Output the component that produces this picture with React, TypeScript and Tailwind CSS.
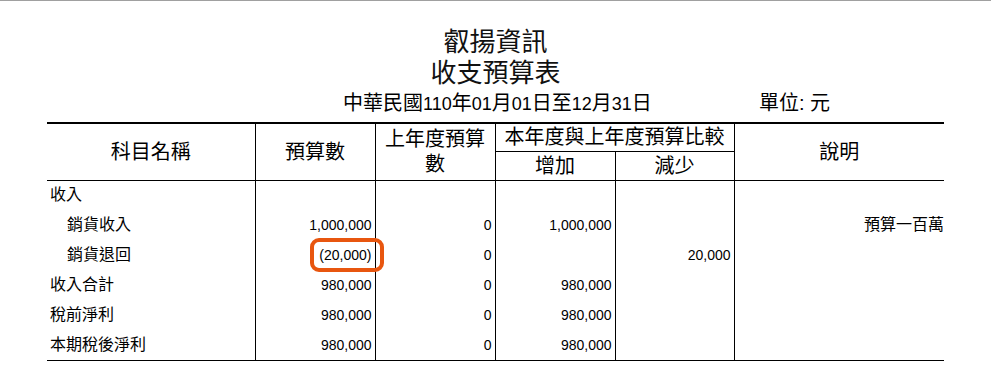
import React from "react";

const cjk = "font-['Liberation_Sans','Noto_Sans_CJK_TC',sans-serif]";

type Row = {
  name: string;
  indent?: boolean;
  budget?: string;
  last?: string;
  inc?: string;
  dec?: string;
  note?: string;
};

const rows: Row[] = [
  { name: "收入" },
  { name: "銷貨收入", indent: true, budget: "1,000,000", last: "0", inc: "1,000,000", note: "預算一百萬" },
  { name: "銷貨退回", indent: true, budget: "(20,000)", last: "0", dec: "20,000" },
  { name: "收入合計", budget: "980,000", last: "0", inc: "980,000" },
  { name: "稅前淨利", budget: "980,000", last: "0", inc: "980,000" },
  { name: "本期稅後淨利", budget: "980,000", last: "0", inc: "980,000" },
];

const Num = ({ v }: { v?: string }) => (
  <span className="text-[14px] font-['Liberation_Sans',sans-serif]">{v}</span>
);

// half-width digits in the date line
const D = ({ children }: { children: React.ReactNode }) => (
  <span className="text-[18px]">{children}</span>
);

export default function App() {
  return (
    <div className={`relative w-[991px] h-[371px] bg-white text-black border-t border-[#a0a0a0] ${cjk}`}>
      <div className="pl-[47px] pt-[26px]">
        <div className="w-[897px] text-center text-[26px] leading-[31px] text-[#111]">
          <div>叡揚資訊</div>
          <div>收支預算表</div>
        </div>
        <div className="flex items-baseline w-[897px] mt-[2px] text-[20px] leading-[24px]">
          <span className="ml-[296px] w-[416px]">
            中華民國<D>110</D>年<D>01</D>月<D>01</D>日至<D>12</D>月<D>31</D>日
          </span>
          <span>單位: 元</span>
        </div>

        <table className="mt-[6px] w-[897px] table-fixed border-collapse">
          <colgroup>
            <col className="w-[208px]" />
            <col className="w-[120px]" />
            <col className="w-[120px]" />
            <col className="w-[120px]" />
            <col className="w-[119px]" />
            <col className="w-[210px]" />
          </colgroup>
          <thead className="text-[20px] font-normal">
            <tr className="h-[28px]">
              <th rowSpan={2} className="border-t-2 border-b border-r border-black font-normal">科目名稱</th>
              <th rowSpan={2} className="border-t-2 border-b border-r border-black font-normal">預算數</th>
              <th rowSpan={2} className="border-t-2 border-b border-r border-black font-normal leading-[25px]">
                上年度預算
                <br />數
              </th>
              <th colSpan={2} className="border-t-2 border-b border-r border-black font-normal leading-[24px]">
                本年度與上年度預算比較
              </th>
              <th rowSpan={2} className="border-t-2 border-b border-black font-normal">說明</th>
            </tr>
            <tr className="h-[29px]">
              <th className="border-b border-r border-black font-normal leading-[24px]">增加</th>
              <th className="border-b border-r border-black font-normal leading-[24px]">減少</th>
            </tr>
          </thead>
          <tbody className="text-[16px]">
            {rows.map((r, i) => (
              <tr key={i} className={`h-[30px] ${i === rows.length - 1 ? "border-b border-black" : ""}`}>
                <td className={`border-r border-black ${r.indent ? "pl-[20px]" : "pl-[3px]"}`}>{r.name}</td>
                <td className="border-r border-black text-right pr-[3px]"><Num v={r.budget} /></td>
                <td className="border-r border-black text-right pr-[3px]"><Num v={r.last} /></td>
                <td className="border-r border-black text-right pr-[3px]"><Num v={r.inc} /></td>
                <td className="border-r border-black text-right pr-[3px]"><Num v={r.dec} /></td>
                <td className="text-right pr-0">{r.note}</td>
              </tr>
            ))}
          </tbody>
        </table>
      </div>

      <div className="absolute left-[310px] top-[237px] w-[74px] h-[34px] border-4 border-[#e8560f] rounded-[9px]" />
    </div>
  );
}
